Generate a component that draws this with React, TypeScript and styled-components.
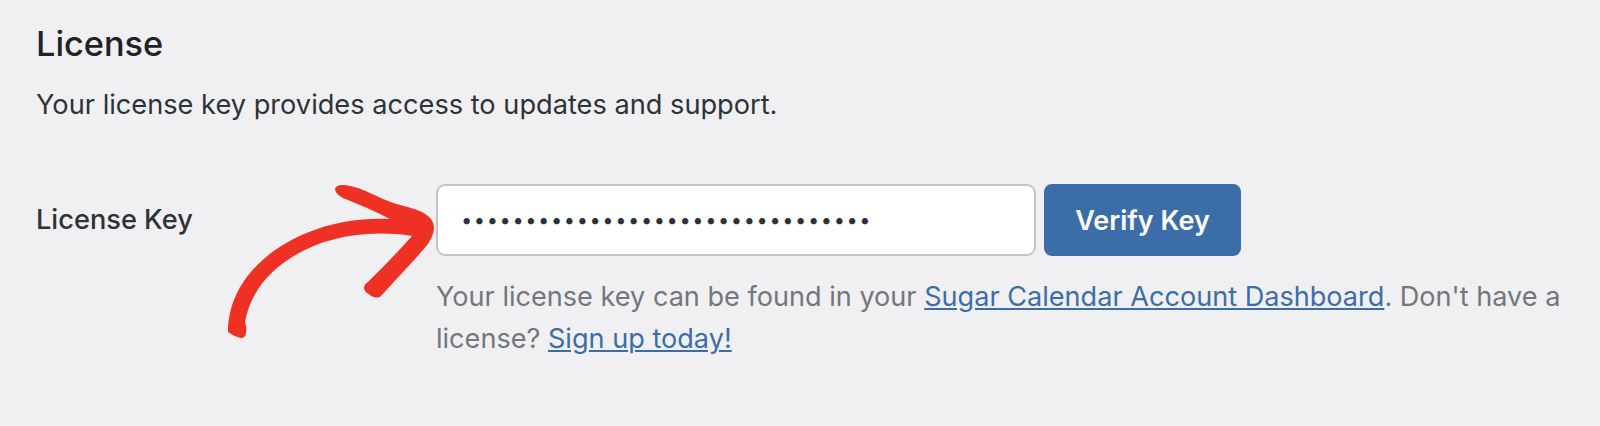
import styled, { createGlobalStyle } from "styled-components";

const GlobalStyle = createGlobalStyle`
  html, body {
    margin: 0;
    padding: 0;
    background: #f0f0f2;
  }
  body {
    font-family: Inter, "Liberation Sans", sans-serif;
    -webkit-font-smoothing: antialiased;
  }
`;

const Page = styled.div`
  position: relative;
  width: 1600px;
  height: 426px;
  overflow: hidden;
  box-sizing: border-box;
  padding: 24px 36px 0;
  background: #f0f0f2;
`;

const Title = styled.h2`
  margin: 0 0 23px;
  font-size: 34.3px;
  line-height: 40px;
  font-weight: 500;
  color: #1d2327;
`;

const Intro = styled.p`
  margin: 0 0 61px;
  font-size: 27.2px;
  line-height: 36px;
  color: #2c3338;
`;

const FieldRow = styled.div`
  display: flex;
  align-items: flex-start;
`;

const FieldLabel = styled.label`
  width: 400px;
  flex: none;
  font-size: 27.2px;
  font-weight: 500;
  line-height: 72px;
  color: #2c3338;
`;

const FieldBody = styled.div`
  flex: 1;
`;

const InputRow = styled.div`
  display: flex;
  gap: 8px;
`;

const KeyInput = styled.input`
  box-sizing: border-box;
  width: 600px;
  height: 72px;
  padding: 0 23px;
  border: 2px solid #c3c4c7;
  border-radius: 9px;
  background: #fff;
  color: #2c3338;
  font-family: Inter, "Liberation Sans", sans-serif;
  font-size: 20px;
  letter-spacing: 1.6px;
  outline: none;
`;

const VerifyButton = styled.button`
  width: 197px;
  height: 72px;
  border: none;
  border-radius: 8px;
  background: #3b6ea8;
  color: #fff;
  font-family: Inter, "Liberation Sans", sans-serif;
  font-size: 27px;
  font-weight: 600;
`;

const Help = styled.p`
  margin: 20px 0 0;
  font-size: 27.1px;
  line-height: 42px;
  color: #72777c;
`;

const HelpLink = styled.a`
  color: #3b6ea8;
  text-decoration: underline;
`;

const Arrow = styled.svg`
  position: absolute;
  left: 0;
  top: 0;
  pointer-events: none;
`;

export default function App() {
  return (
    <>
      <GlobalStyle />
      <Page>
        <Title>License</Title>
        <Intro>Your license key provides access to updates and support.</Intro>
        <FieldRow>
          <FieldLabel>License Key</FieldLabel>
          <FieldBody>
            <InputRow>
              <KeyInput type="password" defaultValue="abcdefghijklmnopqrstuvwxyz123456" readOnly />
              <VerifyButton>Verify Key</VerifyButton>
            </InputRow>
            <Help>
              Your license key can be found in your{" "}
              <HelpLink href="#">Sugar Calendar Account Dashboard</HelpLink>. Don't have a
              <br />
              license? <HelpLink href="#">Sign up today!</HelpLink>
            </Help>
          </FieldBody>
        </FieldRow>
        <Arrow width="1600" height="426" viewBox="0 0 1600 426">
          <path
            fill="#ee3124"
            d="M335 190 C335 186 339 185 343 185 C362 186 378 199 400 205 C415 209 433 213 434 227 C434 240 423 250 415 259 L380 297 C376 298 372 297 370 295 C367 293 364 291 364 288 C364 285 366 283 368 282 C382 268 398 252 412 236 C328 223 255 263 245 322 C246 326 247 329 246 332 C246 336 244 338 241 338 C236 337 232 335 228 332 C228 262 310 214 390 219 C375 211 358 204 343 198 C339 196 336 193 335 190 Z"
          />
        </Arrow>
      </Page>
    </>
  );
}
